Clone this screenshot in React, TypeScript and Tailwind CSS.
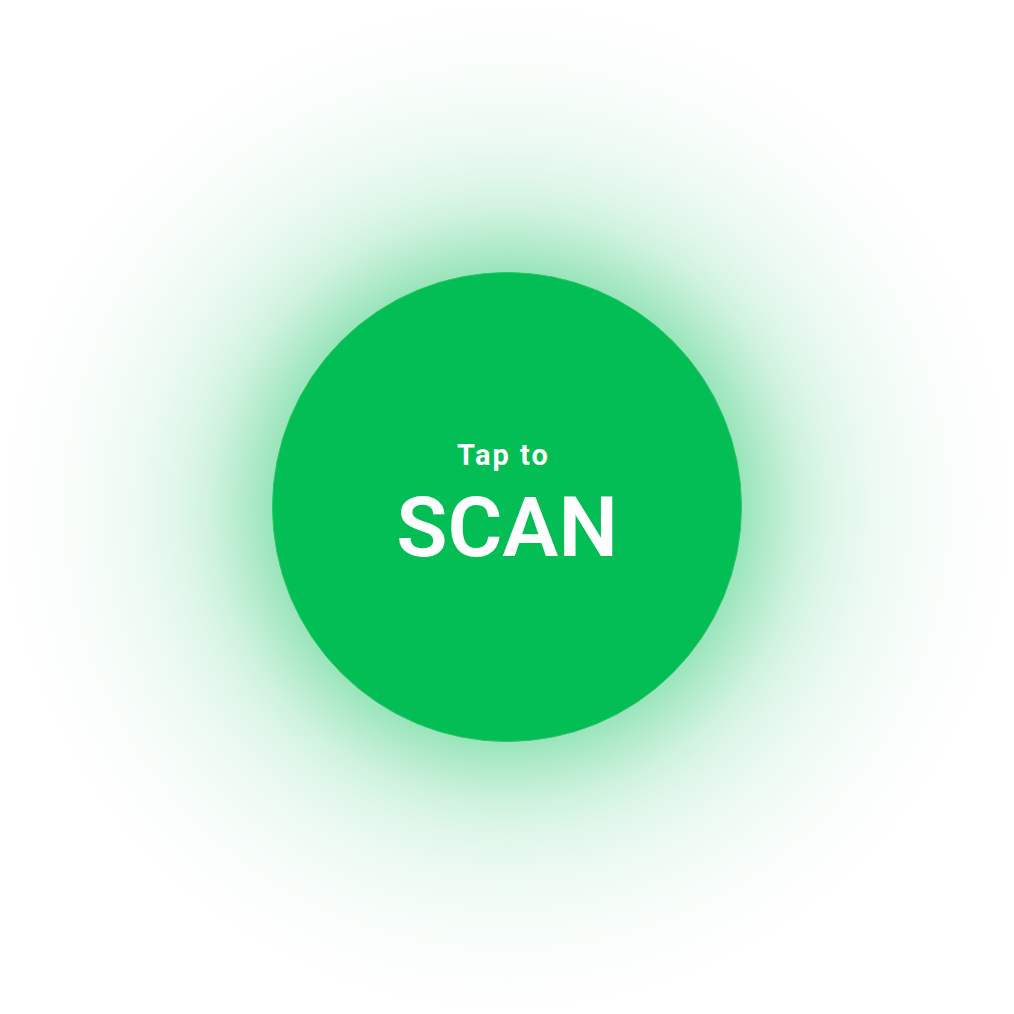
export default function App() {
  return (
    <div className="flex h-[1014px] w-[1014px] items-center justify-center overflow-hidden bg-white bg-[radial-gradient(circle_at_center,rgba(3,189,85,0.4)_235px,rgba(3,189,85,0.3)_262px,rgba(3,189,85,0.19)_297px,rgba(3,189,85,0.12)_330px,rgba(3,189,85,0.075)_367px,rgba(3,189,85,0.035)_420px,rgba(3,189,85,0.012)_470px,rgba(3,189,85,0)_510px)]">
      <button className="flex h-[470px] w-[470px] flex-col items-center justify-center rounded-full border border-[#2ac56b] bg-[#03bd55] pb-[3px] text-white font-['Roboto',sans-serif]">
        <span className="mr-[7px] text-[29px] font-bold leading-none tracking-[0.07em]">Tap to</span>
        <span className="mt-[16px] text-[84px] font-semibold leading-none">SCAN</span>
      </button>
    </div>
  );
}
